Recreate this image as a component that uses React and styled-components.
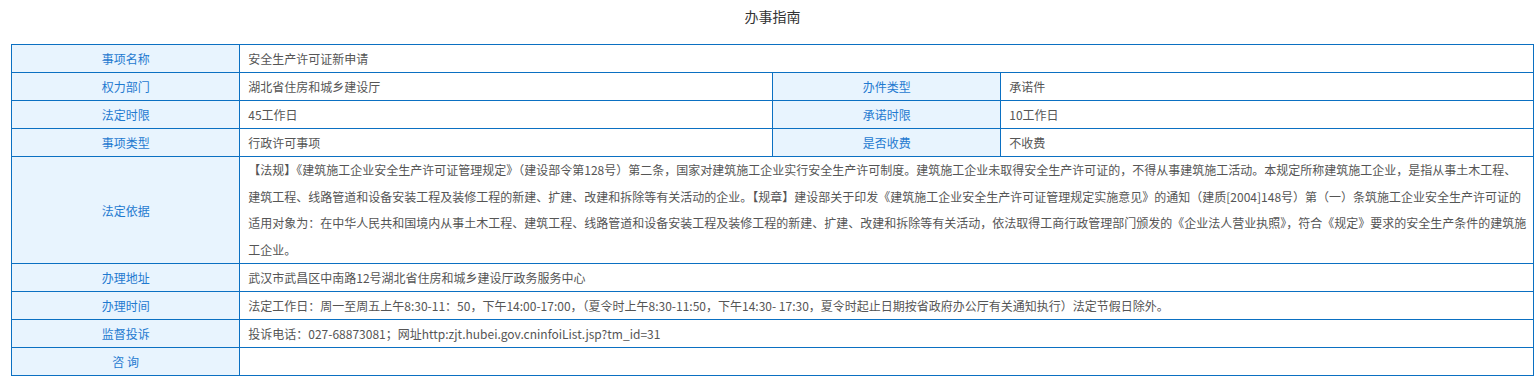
import React from "react";
import styled, { createGlobalStyle } from "styled-components";

const GlobalStyle = createGlobalStyle`
	body {
		margin: 0;
		background: #fff;
		font-family: "Noto Sans CJK SC", "Liberation Sans", sans-serif;
	}
`;

const Page = styled.div`
	padding: 0 2px 0 11px;
`;

const Title = styled.h2`
	margin: 0 0 12px;
	height: 32px;
	line-height: 32px;
	text-align: center;
	font-size: 14px;
	font-weight: 400;
	color: #333;
`;

const Table = styled.table`
	width: 100%;
	border-collapse: collapse;
	table-layout: fixed;
	font-size: 12px;
	border: 1px solid #0b70c2;
`;

const Label = styled.td`
	height: 27px;
	padding: 0;
	border: 1px solid #0b70c2;
	background: #e8f4fe;
	color: #1f7ad0;
	text-align: center;
	vertical-align: middle;
`;

const Value = styled.td`
	height: 27px;
	padding: 0 0 0 8px;
	border: 1px solid #0b70c2;
	color: #555;
	text-align: left;
	vertical-align: middle;
	line-height: ${({ $multi }) => ($multi ? "26.5px" : "normal")};
`;

const Line = styled.span`
	display: block;
	white-space: nowrap;
	overflow: hidden;
`;

// line breaks as they fall in the original page
const basis = [
	"【法规】《建筑施工企业安全生产许可证管理规定》（建设部令第128号）第二条，国家对建筑施工企业实行安全生产许可制度。建筑施工企业未取得安全生产许可证的，不得从事建筑施工活动。本规定所称建筑施工企业，是指从事土木工程、",
	"建筑工程、线路管道和设备安装工程及装修工程的新建、扩建、改建和拆除等有关活动的企业。【规章】建设部关于印发《建筑施工企业安全生产许可证管理规定实施意见》的通知（建质[2004]148号）第（一）条筑施工企业安全生产许可证的",
	"适用对象为：在中华人民共和国境内从事土木工程、建筑工程、线路管道和设备安装工程及装修工程的新建、扩建、改建和拆除等有关活动，依法取得工商行政管理部门颁发的《企业法人营业执照》，符合《规定》要求的安全生产条件的建筑施",
	"工企业。",
];

const App = () => {
	return (
		<Page>
			<GlobalStyle />
			<Title>办事指南</Title>
			<Table>
				<colgroup>
					<col style={{ width: "15%" }} />
					<col style={{ width: "35%" }} />
					<col style={{ width: "15%" }} />
					<col style={{ width: "35%" }} />
				</colgroup>
				<tbody>
					<tr>
						<Label>事项名称</Label>
						<Value colSpan={3}>安全生产许可证新申请</Value>
					</tr>
					<tr>
						<Label>权力部门</Label>
						<Value>湖北省住房和城乡建设厅</Value>
						<Label>办件类型</Label>
						<Value>承诺件</Value>
					</tr>
					<tr>
						<Label>法定时限</Label>
						<Value>45工作日</Value>
						<Label>承诺时限</Label>
						<Value>10工作日</Value>
					</tr>
					<tr>
						<Label>事项类型</Label>
						<Value>行政许可事项</Value>
						<Label>是否收费</Label>
						<Value>不收费</Value>
					</tr>
					<tr>
						<Label>法定依据</Label>
						<Value colSpan={3} $multi>
							{basis.map((t, i) => (
								<Line key={i}>{t}</Line>
							))}
						</Value>
					</tr>
					<tr>
						<Label>办理地址</Label>
						<Value colSpan={3}>武汉市武昌区中南路12号湖北省住房和城乡建设厅政务服务中心</Value>
					</tr>
					<tr>
						<Label>办理时间</Label>
						<Value colSpan={3}>
							法定工作日：周一至周五上午8:30-11：50，下午14:00-17:00，（夏令时上午8:30-11:50，下午14:30- 17:30，夏令时起止日期按省政府办公厅有关通知执行）法定节假日除外。
						</Value>
					</tr>
					<tr>
						<Label>监督投诉</Label>
						<Value colSpan={3}>投诉电话：027-68873081；网址http:zjt.hubei.gov.cninfoiList.jsp?tm_id=31</Value>
					</tr>
					<tr>
						<Label>咨 询</Label>
						<Value colSpan={3} />
					</tr>
				</tbody>
			</Table>
		</Page>
	);
};

export default App;
